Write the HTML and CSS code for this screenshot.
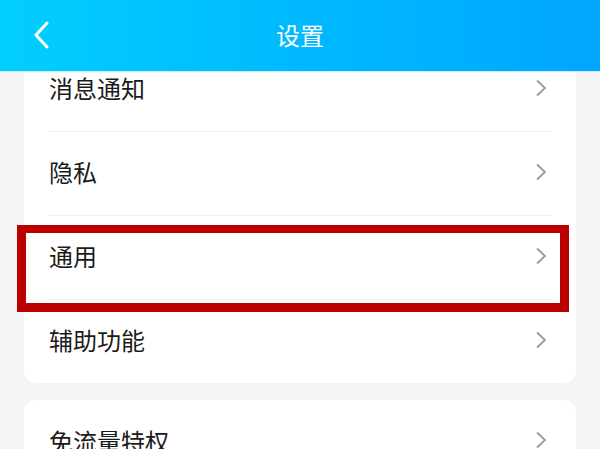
FILE: index.html
```html
<!DOCTYPE html>
<html lang="zh-CN">
<head>
<meta charset="utf-8">
<title>设置</title>
<link rel="stylesheet" href="styles.css">
</head>
<body>
<div class="page">
  <header class="topbar">
    <svg class="back" width="16" height="28" viewBox="0 0 16 28"><polyline points="14,2 3,14 14,26" fill="none" stroke="#fff" stroke-width="3" stroke-linecap="round" stroke-linejoin="round"/></svg>
    <h1 class="title">设置</h1>
  </header>
  <main class="scroll">
    <div class="scroll-inner">
      <section class="card">
        <div class="row"><span class="label">消息通知</span><svg class="chev" width="12" height="18" viewBox="0 0 12 18"><polyline points="2,1.5 10,9 2,16.5" fill="none" stroke="#999" stroke-width="1.8"/></svg></div>
        <div class="row"><span class="label">隐私</span><svg class="chev" width="12" height="18" viewBox="0 0 12 18"><polyline points="2,1.5 10,9 2,16.5" fill="none" stroke="#999" stroke-width="1.8"/></svg></div>
        <div class="row"><span class="label">通用</span><svg class="chev" width="12" height="18" viewBox="0 0 12 18"><polyline points="2,1.5 10,9 2,16.5" fill="none" stroke="#999" stroke-width="1.8"/></svg></div>
        <div class="row last"><span class="label">辅助功能</span><svg class="chev" width="12" height="18" viewBox="0 0 12 18"><polyline points="2,1.5 10,9 2,16.5" fill="none" stroke="#999" stroke-width="1.8"/></svg></div>
      </section>
      <section class="card card2">
        <div class="row"><span class="label">免流量特权</span><svg class="chev" width="12" height="18" viewBox="0 0 12 18"><polyline points="2,1.5 10,9 2,16.5" fill="none" stroke="#999" stroke-width="1.8"/></svg></div>
      </section>
    </div>
    <div class="highlight"></div>
  </main>
</div>
</body>
</html>
```
FILE: styles.css
```css
* { box-sizing: border-box; }
html, body { margin: 0; padding: 0; }
body {
  background: #f5f5f5;
  font-family: "Noto Sans CJK SC", "Noto Sans", sans-serif;
  width: 600px;
  height: 449px;
  overflow: hidden;
}
.page { width: 600px; height: 449px; overflow: hidden; }
.topbar {
  height: 72px;
  background: linear-gradient(90deg, #02cefe 0%, #00b9ff 50%, #00a6ff 100%);
  border-bottom: 1px solid #c4efff;
  display: flex;
  align-items: center;
  justify-content: center;
  position: relative;
}
.back {
  position: absolute;
  left: 33px;
  top: 21px;
}
.title {
  margin: -2px 0 0 0;
  font-size: 24px;
  font-weight: 400;
  color: #fff;
  line-height: 1;
}
.scroll {
  position: relative;
  height: 377px;
  overflow: hidden;
}
.scroll-inner { margin-top: -24px; }
.card {
  margin: 0 24px;
  background: #fff;
  border-radius: 12px;
}
.card2 { margin-top: 17px; }
.row {
  height: 84px;
  margin: 0 24px;
  padding-left: 1px;
  border-bottom: 1px solid #eeeeee;
  display: flex;
  align-items: center;
  justify-content: space-between;
}
.row.last { border-bottom: none; height: 83px; }
.card2 .row { border-bottom: none; }
.label {
  font-size: 24px;
  color: #1b1b1b;
  line-height: 1;
  margin-top: -3px;
}
.chev { margin-right: 5px; margin-top: -4px; }
.highlight {
  position: absolute;
  left: 17px;
  top: 153px;
  width: 552px;
  height: 87px;
  border: 9px solid #bb0000;
  border-top-width: 8px;
  pointer-events: none;
}
```
